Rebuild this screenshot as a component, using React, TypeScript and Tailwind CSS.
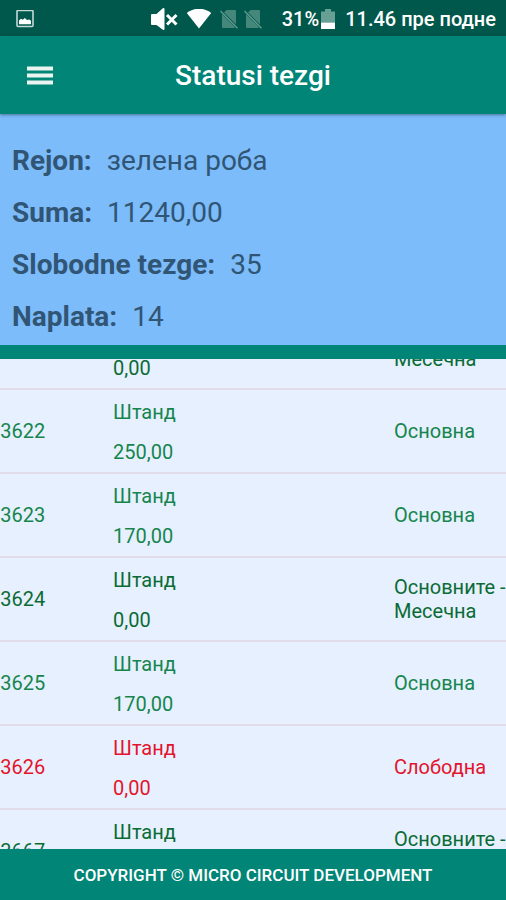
import { useLayoutEffect, useRef } from 'react'

interface Stall {
  id: string
  type: string
  amount: string
  status: string
  tone: 'monthly' | 'basic' | 'free'
}

const TONES: Record<Stall['tone'], string> = {
  monthly: 'text-[#0b6b35]',
  basic: 'text-[#15854d]',
  free: 'text-[#e3142b]',
}

const SUMMARY = [
  { label: 'Rejon:', value: 'зелена роба' },
  { label: 'Suma:', value: '11240,00' },
  { label: 'Slobodne tezge:', value: '35' },
  { label: 'Naplata:', value: '14' },
]

const STALLS: Stall[] = [
  { id: '33621', type: 'Штанд', amount: '0,00', status: 'Основните - Месечна', tone: 'monthly' },
  { id: '33622', type: 'Штанд', amount: '250,00', status: 'Основна', tone: 'basic' },
  { id: '33623', type: 'Штанд', amount: '170,00', status: 'Основна', tone: 'basic' },
  { id: '33624', type: 'Штанд', amount: '0,00', status: 'Основните - Месечна', tone: 'monthly' },
  { id: '33625', type: 'Штанд', amount: '170,00', status: 'Основна', tone: 'basic' },
  { id: '33626', type: 'Штанд', amount: '0,00', status: 'Слободна', tone: 'free' },
  { id: '33667', type: 'Штанд', amount: '0,00', status: 'Основните - Месечна', tone: 'monthly' },
]

function NoSimIcon() {
  return (
    <svg viewBox="0 0 18 20" className="h-5 w-[18px]" aria-hidden="true">
      <path d="M6.500 1H15q1 0 1 1v13.600L4 3.600zM2 5l13 13.200q-.4.8-1.200.8H3q-1 0-1-1z" fill="#46877b" />
      <path d="M0.500 2 17.500 19.200" stroke="#5d9a8f" strokeWidth="1.500" />
    </svg>
  )
}

function StatusBar() {
  return (
    <div className="flex h-9 shrink-0 items-center bg-[#00574b] pt-[2px] pr-[10px] pl-4 text-white">
      <svg viewBox="0 0 18 18" className="h-[18px] w-[18px]" aria-hidden="true">
        <rect x="1" y="0.500" width="16" height="16" rx="1" fill="none" stroke="#c3d9d5" strokeWidth="1.6" />
        <path d="M3 14.2V10.400l2-1.600 1.800 1 2-1.800 2.200 2 2.200-.6 1.800 1.400v3.400z" fill="#fff" />
      </svg>

      <div className="ml-auto flex items-center">
        <svg viewBox="0 0 28 24" className="h-6 w-7" aria-hidden="true">
          <path d="M2 7h4.500L12.500 1.400q2-1 2 .6v20q0 1.600-2 .6L6.500 18H2q-1 0-1-1V8q0-1 1-1z" fill="#fff" />
          <path d="M17 8l9.500 9.500M26.500 8L17 17.500" stroke="#fff" strokeWidth="3" />
        </svg>
        <svg viewBox="0 0 26 21" className="ml-2 h-[21px] w-[26px]" aria-hidden="true">
          <path d="M13 19.500 0.800 4C4 1.400 8.300-.2 13-.2S22 1.400 25.200 4z" fill="#fff" />
        </svg>
        <div className="ml-2 flex gap-[6px]">
          <NoSimIcon />
          <NoSimIcon />
        </div>
        <span className="ml-5 text-[20px] leading-6 font-medium">31%</span>
        <svg viewBox="0 0 14 21" className="ml-[2px] h-[21px] w-[14px]" aria-hidden="true">
          <path d="M4 0h6v2.500h4v11H0v-11h4z" fill="#66a095" />
          <path d="M0 13.500h14V20H0z" fill="#fff" />
        </svg>
        <span className="ml-[10px] text-[20px] leading-6 font-medium">11.46 пре подне</span>
      </div>
    </div>
  )
}

export default function App() {
  const listRef = useRef<HTMLDivElement>(null)

  useLayoutEffect(() => {
    listRef.current?.scrollTo(11, 53)
  }, [])

  return (
    <div className="flex h-screen flex-col overflow-hidden bg-[#e6f0fe] font-['Roboto',sans-serif]">
      <StatusBar />

      <header className="relative z-10 grid h-[78px] shrink-0 grid-cols-[1fr_auto_1fr] items-center bg-[#018577] px-[26px] pt-[2px] shadow-[0_1px_3px_rgba(0,0,0,0.4)]">
        <button type="button" aria-label="Menu" className="justify-self-start">
          <svg viewBox="0 0 28 20" className="block h-5 w-7" fill="#e9f5f1" aria-hidden="true">
            <rect x="1" y="0.500" width="26" height="4" />
            <rect x="1" y="7.500" width="26" height="4" />
            <rect x="1" y="14.500" width="26" height="4" />
          </svg>
        </button>
        <h1 className="text-[28px] leading-9 font-medium text-white">Statusi tezgi</h1>
      </header>

      <dl className="shrink-0 border-b-[14px] border-[#018577] bg-[#7cbcfb] px-3 pt-[21px] pb-[2px] text-[28px] leading-[52px] text-[#315574]">
        {SUMMARY.map((item) => (
          <div key={item.label} className="flex gap-[15px]">
            <dt className="font-bold">{item.label}</dt>
            <dd>{item.value}</dd>
          </div>
        ))}
      </dl>

      <div ref={listRef} className="min-h-0 flex-1 overflow-auto [scrollbar-width:none]">
        <table className="w-[calc(100%+11px)] table-fixed border-separate border-spacing-0 text-[20px] leading-6">
          <colgroup>
            <col className="w-[24%]" />
            <col />
            <col className="w-28" />
          </colgroup>
          <tbody>
            {STALLS.map((stall) => (
              <tr key={stall.id} className={TONES[stall.tone]}>
                <td className="border-b-2 border-[#e2dbe9] p-0">{stall.id}</td>
                <td className="border-b-2 border-[#e2dbe9] px-0 pt-[10px] pb-2">
                  <div className="flex flex-col gap-4">
                    <span>{stall.type}</span>
                    <span>{stall.amount}</span>
                  </div>
                </td>
                <td className="border-b-2 border-[#e2dbe9] p-0">{stall.status}</td>
              </tr>
            ))}
          </tbody>
        </table>
      </div>

      <footer className="flex h-[51px] shrink-0 items-center justify-center bg-[#018577] text-[17px] leading-6 font-medium text-white">
        COPYRIGHT © MICRO CIRCUIT DEVELOPMENT
      </footer>
    </div>
  )
}
